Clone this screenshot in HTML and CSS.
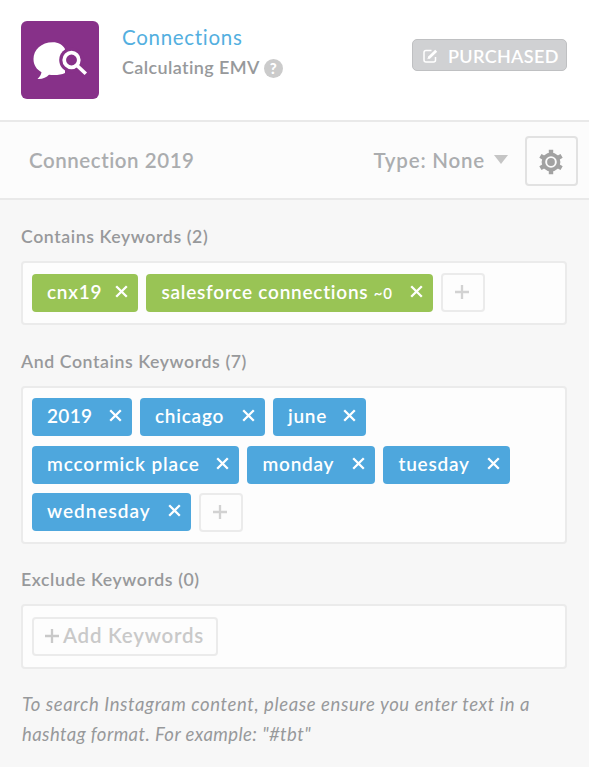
FILE: index.html
```html
<!DOCTYPE html>
<html lang="en">
<head>
<meta charset="utf-8">
<title>Connections</title>
<link rel="stylesheet" href="styles.css">
</head>
<body>
<svg class="defs" width="0" height="0" aria-hidden="true">
  <symbol id="x" viewBox="0 0 13 13"><path d="M1.2 1.2 11.8 11.8M11.8 1.2 1.2 11.8" fill="none" stroke="currentColor" stroke-width="2.3"/></symbol>
  <symbol id="plus" viewBox="0 0 14 14"><path d="M7 0V14M0 7H14" fill="none" stroke="currentColor" stroke-width="2.3"/></symbol>
</svg>
<header class="header">
  <div class="logo">
    <svg width="78" height="78" viewBox="0 0 78 78">
      <path d="M32 21.300C20 21.300 12.500 29 12.500 38c0 6 3 10.500 8 13.200-.5 3-2 4.800-4 6.800 5 .3 9-1.500 11.500-4.200 6 .7 12 .2 16-1.800V28c-2-4-7-6.700-12-6.700Z" fill="#fff"/>
      <circle cx="50.500" cy="39" r="12.300" fill="#873189"/>
      <path d="m56.500 45 8 8" stroke="#873189" stroke-width="7"/>
      <circle cx="50.500" cy="39" r="7.300" fill="none" stroke="#fff" stroke-width="3.700"/>
      <path d="m56 44.500 8.800 8.300" stroke="#fff" stroke-width="3.600"/>
    </svg>
  </div>
  <div class="heading">
    <a class="title">Connections</a>
    <div class="sub"><span class="subtext">Calculating EMV</span><span class="help">?</span></div>
  </div>
  <div class="badge">
    <svg width="15" height="14" viewBox="0 0 15 14" fill="none" stroke="#fff" stroke-width="1.500"><path d="M8.500 1.500H3Q1 1.500 1 3.500V11Q1 13 3 13h7.500q2 0 2-2V8"/><path d="m5.700 8.900 7.500-7.200" stroke-width="2.800"/><path d="m4.300 10.300 1-2.800 1.800 1.700Z" fill="#fff" stroke="none"/></svg>
    <span class="badgetext">PURCHASED</span>
  </div>
</header>
<div class="toolbar">
  <span class="name">Connection 2019</span>
  <span class="type">Type: None</span>
  <span class="caret"></span>
  <button class="gear">
    <svg width="26" height="26" viewBox="-13 -13 26 26" fill="none" stroke="#a2a2a2">
      <circle r="7.600" stroke-width="3.600"/>
      <path d="M0-8V-12.300M0 8V12.300M6.900-4 10.600-6.100M6.900 4 10.600 6.100M-6.900-4-10.600-6.100M-6.900 4-10.600 6.100" stroke-width="4.400"/>
      <circle r="3.900" fill="#a2a2a2" stroke="none"/>
    </svg>
  </button>
</div>
<main class="content">
  <h2 class="label l1">Contains Keywords (2)</h2>
  <div class="box green">
    <span class="chip w-cnx"><span class="word">cnx19</span><svg class="x"><use href="#x"/></svg></span>
    <span class="chip w-salesforce"><span class="word">salesforce connections <small>~0</small></span><svg class="x"><use href="#x"/></svg></span>
    <button class="add"><svg class="plus"><use href="#plus"/></svg></button>
  </div>
  <h2 class="label l2">And Contains Keywords (7)</h2>
  <div class="box blue">
    <span class="chip w-2019"><span class="word">2019</span><svg class="x"><use href="#x"/></svg></span>
    <span class="chip w-chicago"><span class="word">chicago</span><svg class="x"><use href="#x"/></svg></span>
    <span class="chip w-june"><span class="word">june</span><svg class="x"><use href="#x"/></svg></span>
    <span class="chip w-place"><span class="word">mccormick place</span><svg class="x"><use href="#x"/></svg></span>
    <span class="chip w-monday"><span class="word">monday</span><svg class="x"><use href="#x"/></svg></span>
    <span class="chip w-tuesday"><span class="word">tuesday</span><svg class="x"><use href="#x"/></svg></span>
    <span class="chip w-wednesday"><span class="word">wednesday</span><svg class="x"><use href="#x"/></svg></span>
    <button class="add"><svg class="plus"><use href="#plus"/></svg></button>
  </div>
  <h2 class="label l3">Exclude Keywords (0)</h2>
  <div class="box">
    <button class="add wide"><svg class="plus"><use href="#plus"/></svg><span class="addtext">Add Keywords</span></button>
  </div>
  <p class="hint"><span class="line-one">To search Instagram content, please ensure you enter text in a</span><br><span class="line-two">hashtag format. For example: "#tbt"</span></p>
</main>
</body>
</html>
```
FILE: styles.css
```css
* { box-sizing: border-box; }
body {
  margin: 0;
  height: 767px;
  overflow: hidden;
  background: #f7f7f7;
  font-family: Lato, "Open Sans", sans-serif;
  font-weight: 600;
  color: #97999b;
}
button { font: inherit; color: inherit; padding: 0; }
svg { display: block; flex: none; }
.defs { position: absolute; }
.header {
  display: flex;
  align-items: flex-start;
  height: 122px;
  padding: 21px 22px 0 21px;
  background: #fff;
  border-bottom: 2px solid #e9e9e9;
}
.logo { width: 78px; height: 78px; border-radius: 6px; background: #873189; }
.heading { margin-left: 23px; padding-top: 2px; }
.title {
  display: block;
  font-size: 20.5px;
  line-height: 28px;
  font-weight: 400;
  letter-spacing: 0.7px;
  color: #53afe0;
}
.sub { display: flex; align-items: center; height: 32px; font-size: 18px; letter-spacing: 0.38px; }
.help {
  width: 19px;
  height: 19px;
  margin: 2px 0 0 4px;
  border-radius: 50%;
  background: #cbcbcb;
  color: #fff;
  font-size: 15px;
  font-weight: 900;
  line-height: 19px;
  letter-spacing: 0;
  text-align: center;
}
.badge {
  display: flex;
  align-items: center;
  width: 155px;
  height: 32px;
  margin: 18px 0 0 auto;
  padding-left: 10px;
  border: 1px solid #bfc0c2;
  border-radius: 5px;
  background: #d0d1d3;
  color: #fff;
  font-size: 18px;
}
.badge svg { margin-top: 2px; }
.badgetext { margin: 2px 0 0 10px; letter-spacing: 0.35px; white-space: nowrap; }
.toolbar {
  display: flex;
  align-items: center;
  height: 78px;
  padding: 0 11px 0 29px;
  background: #fcfcfc;
  border-bottom: 2px solid #e9e9e9;
  color: #abadaf;
  font-size: 20.5px;
}
.name { margin-top: -1px; letter-spacing: 0.55px; }
.type { margin: -1px 0 0 auto; letter-spacing: 0.8px; }
.caret {
  margin: -2px 17px 0 9px;
  border: 7px solid transparent;
  border-top: 9px solid #c5c5c5;
  border-bottom: 0;
}
.gear {
  display: grid;
  place-items: center;
  width: 53px;
  height: 50px;
  margin-top: 2px;
  padding: 2px 1px 0 0;
  border: 2px solid #e2e2e2;
  border-radius: 4px;
  background: #fcfcfc;
}
.content { padding: 0 22px 0 21px; }
.label { margin: 0; font-size: 17.7px; font-weight: 600; line-height: 24px; letter-spacing: 0.58px; }
.l1 { padding: 25px 0 12px; }
.l2 { padding: 25px 0 12px; }
.l3 { padding: 24px 0 12px; }
.box {
  display: flex;
  flex-wrap: wrap;
  gap: 9.5px 8px;
  padding: 10px 8.500px;
  border: 2px solid #ebebeb;
  border-radius: 4px;
  background: #fdfdfd;
}
.green { padding-bottom: 11px; }
.blue { padding-bottom: 10px; }
.chip {
  display: flex;
  justify-content: space-between;
  height: 38px;
  padding: 0 10px 0 15.500px;
  border-radius: 4px;
  color: #fff;
  font-size: 19px;
  line-height: 35px;
  letter-spacing: 0.75px;
  white-space: nowrap;
}
.green .chip { background: #99c455; margin-top: 1px; }
.blue .chip { background: #4ea7dd; }
.chip small { font-size: 15px; }
.w-cnx { width: 106.5px; }
.w-salesforce { width: 287px; }
.w-2019 { width: 100px; }
.w-2019 .word { letter-spacing: 0.3px; }
.w-chicago { width: 125px; }
.w-june { width: 93.5px; }
.w-place { width: 207.5px; }
.w-place .word { letter-spacing: 0.87px; }
.w-monday { width: 128px; }
.w-tuesday { width: 126.5px; }
.w-wednesday { width: 159.5px; }
.w-wednesday .word { letter-spacing: 1px; }
.x { width: 13px; height: 13px; margin-top: 11px; }
.add {
  display: flex;
  align-items: center;
  justify-content: center;
  width: 43.5px;
  height: 39px;
  border: 2px solid #ebebeb;
  border-radius: 4px;
  background: #fdfdfd;
  color: #d2d2d2;
}
.plus { width: 14px; height: 14px; margin: -1px 1px 0 0; }
.wide { width: 186px; margin: 1px 0; color: #c9c9c9; font-size: 20.5px; }
.addtext { margin: -3px 0 0 3px; letter-spacing: 0.75px; white-space: nowrap; }
.hint {
  margin: 20px 0 0 1px;
  font-size: 18.5px;
  font-style: italic;
  font-weight: 400;
  line-height: 30px;
  white-space: nowrap;
}
.line-one { letter-spacing: 0.6px; }
.line-two { letter-spacing: 0.42px; }
```
